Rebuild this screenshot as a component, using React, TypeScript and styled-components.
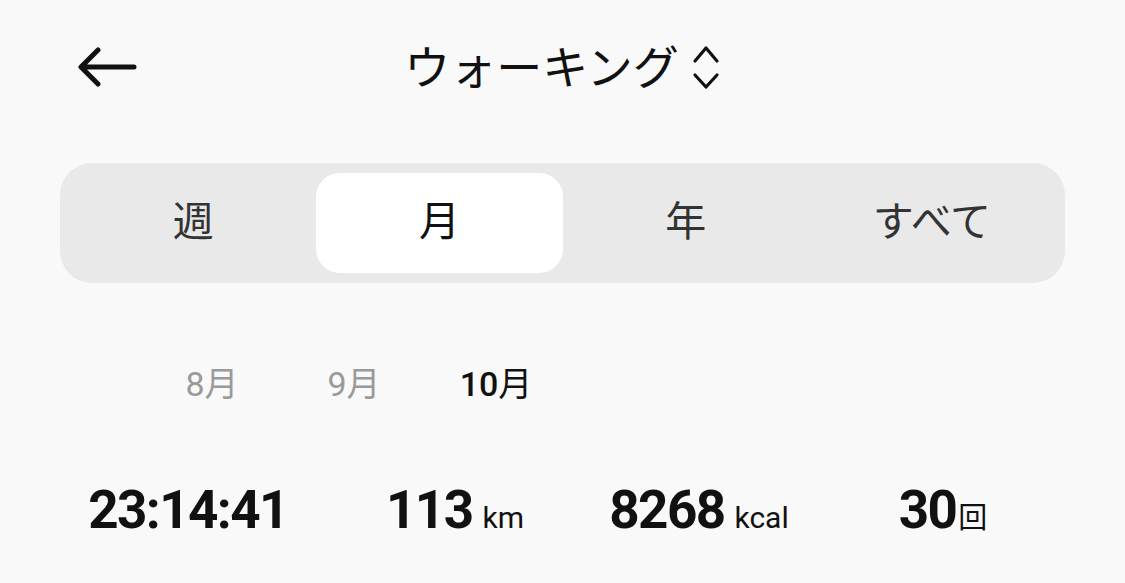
import React, { useState } from 'react';
import styled, { createGlobalStyle } from 'styled-components';

const GlobalStyle = createGlobalStyle`
  html, body {
    margin: 0;
    padding: 0;
    background: #f9f9f9;
  }
  body {
    font-family: "Roboto", "Noto Sans CJK JP", sans-serif;
    color: #111;
  }
`;

const tabs = ['週', '月', '年', 'すべて'];
const months = ['8', '9', '10'];

const stats = [
  { value: '23:14:41', unit: '', cjk: false },
  { value: '113', unit: 'km', cjk: false },
  { value: '8268', unit: 'kcal', cjk: false },
  { value: '30', unit: '回', cjk: true },
];

const App: React.FC = () => {
  const [tab, setTab] = useState(1);
  const [month, setMonth] = useState(2);

  return (
    <Page>
      <GlobalStyle />
      <Header>
        <BackButton aria-label="戻る">
          <svg width="60" height="44" viewBox="0 0 60 44" fill="none">
            <path
              d="M4 22 H56 M20 5 L3 22 L20 39"
              stroke="#111"
              strokeWidth="5"
              strokeLinecap="round"
              strokeLinejoin="round"
            />
          </svg>
        </BackButton>
        <Title>
          <TitleText>ウォーキング</TitleText>
          <svg width="30" height="46" viewBox="0 0 30 46" fill="none">
            <path
              d="M4 17 L15 4 L26 17 M4 31 L15 43 L26 31"
              stroke="#111"
              strokeWidth="3.2"
              strokeLinecap="round"
              strokeLinejoin="round"
            />
          </svg>
        </Title>
        <span />
      </Header>

      <Segment>
        {tabs.map((t, i) => (
          <Tab key={t} $active={i === tab} onClick={() => setTab(i)}>
            {t}
          </Tab>
        ))}
      </Segment>

      <MonthRow>
        {months.map((m, i) => (
          <Month key={m} $active={i === month} onClick={() => setMonth(i)}>
            <MonthNum $active={i === month}>{m}</MonthNum>月
          </Month>
        ))}
      </MonthRow>

      <StatsRow>
        {stats.map((s) => (
          <Stat key={s.value}>
            <StatValue>{s.value}</StatValue>
            {s.unit && <StatUnit $cjk={s.cjk}>{s.unit}</StatUnit>}
          </Stat>
        ))}
      </StatsRow>
    </Page>
  );
};

export default App;

const Page = styled.div`
  width: 1125px;
  height: 583px;
  box-sizing: border-box;
  padding: 22px 60px 0;
  overflow: hidden;
  background: #f9f9f9;
`;

const Header = styled.header`
  height: 90px;
  display: grid;
  grid-template-columns: 1fr auto 1fr;
  align-items: center;
`;

const BackButton = styled.button`
  justify-self: start;
  margin-left: 18px;
  padding: 0;
  border: none;
  background: none;
  display: flex;
  cursor: pointer;
`;

const Title = styled.h1`
  margin: 0;
  display: flex;
  align-items: center;
  gap: 12px;
  font-family: "Noto Sans CJK JP", sans-serif;
  font-size: 46px;
  font-weight: 400;
  line-height: 60px;
  color: #111;
`;

const TitleText = styled.span`
  position: relative;
  top: -3px;
`;

const Segment = styled.div`
  margin-top: 51px;
  height: 120px;
  box-sizing: border-box;
  padding: 10px;
  border-radius: 32px;
  background: #e9e9e9;
  display: flex;
`;

const Tab = styled.button<{ $active: boolean }>`
  flex: 1;
  border: none;
  border-radius: 24px;
  background: ${(p) => (p.$active ? '#ffffff' : 'transparent')};
  color: ${(p) => (p.$active ? '#111' : '#333')};
  font-family: "Noto Sans CJK JP", sans-serif;
  font-size: 41px;
  font-weight: 400;
  cursor: pointer;
  padding: 0 0 10px;
`;

const MonthRow = styled.div`
  margin-top: 79px;
  padding-left: 81px;
  display: flex;
`;

const Month = styled.div<{ $active: boolean }>`
  width: 142px;
  text-align: center;
  font-family: "Noto Sans CJK JP", sans-serif;
  font-size: 34px;
  line-height: 40px;
  font-weight: 400;
  color: ${(p) => (p.$active ? '#111' : '#9a9a9a')};
  cursor: pointer;
`;

const MonthNum = styled.span<{ $active: boolean }>`
  font-family: "Roboto", sans-serif;
  font-weight: ${(p) => (p.$active ? 500 : 400)};
`;

const StatsRow = styled.div`
  margin-top: 76px;
  display: grid;
  grid-template-columns: 256px 278px 210px 278px;
  justify-items: center;
`;

const Stat = styled.div`
  display: flex;
  align-items: baseline;
  gap: 10px;
`;

const StatValue = styled.span`
  font-family: "Roboto", sans-serif;
  font-size: 53px;
  line-height: 60px;
  font-weight: 700;
  letter-spacing: -1.6px;
  color: #111;
`;

const StatUnit = styled.span<{ $cjk: boolean }>`
  font-family: ${(p) => (p.$cjk ? '"Noto Sans CJK JP", sans-serif' : '"Roboto", sans-serif')};
  font-size: ${(p) => (p.$cjk ? '29px' : '30px')};
  margin-left: ${(p) => (p.$cjk ? '-8px' : '0')};
  color: #111;
`;
